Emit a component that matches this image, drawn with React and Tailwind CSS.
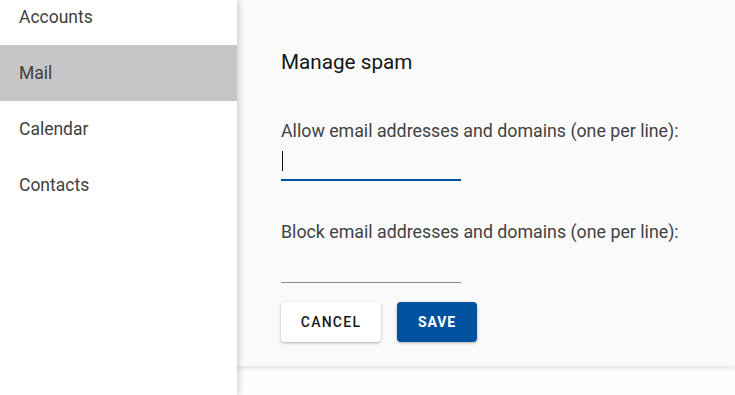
export default function App() {
  const items = ["Accounts", "Mail", "Calendar", "Contacts"];
  return (
    <div className="w-[735px] h-[395px] overflow-hidden flex bg-white" style={{ fontFamily: "Roboto, 'Liberation Sans', sans-serif" }}>
      <aside className="w-[237px] shrink-0 bg-white relative z-10 shadow-[2px_0_6px_rgba(0,0,0,0.18)]">
        <ul className="mt-[-11px]">
          {items.map((it) => (
            <li
              key={it}
              className={`h-[56px] flex items-center pl-[19px] text-[17.5px] text-[#404040] ${it === "Mail" ? "bg-[#c6c6c6]" : ""}`}
            >
              {it}
            </li>
          ))}
        </ul>
      </aside>
      <main className="flex-1 flex flex-col bg-[#fdfdfd]">
        <section className="h-[366px] bg-[#fafafa] pl-[44px] pt-[50px] shadow-[0_2px_5px_rgba(0,0,0,0.12)] relative">
          <h2 className="text-[20.7px] leading-[24px] text-[#161616] font-normal">Manage spam</h2>
          <label className="block mt-[45px] text-[17.8px] leading-[24px] text-[#424242]">
            Allow email addresses and domains (one per line):
          </label>
          <div className="w-[180px] h-[38px] border-b-2 border-[#0051a0] flex items-center">
            <span className="w-[1px] h-[20px] bg-[#111] ml-[1px]"></span>
          </div>
          <label className="block mt-[39px] text-[17.8px] leading-[24px] text-[#424242]">
            Block email addresses and domains (one per line):
          </label>
          <div className="w-[180px] h-[39px] border-b border-[#8a8a8a]"></div>
          <div className="flex gap-[16px] mt-[19px]">
            <button className="w-[100px] h-[40px] rounded-[4px] bg-white text-[14px] font-medium tracking-[0.09em] text-[#1a1a1a] shadow-[0_1px_3px_rgba(0,0,0,0.3)]">
              CANCEL
            </button>
            <button className="w-[80px] h-[40px] rounded-[4px] bg-[#0051a0] text-[14px] font-bold tracking-[0.06em] text-white shadow-[0_1px_3px_rgba(0,0,0,0.3)]">
              SAVE
            </button>
          </div>
        </section>
      </main>
    </div>
  );
}
